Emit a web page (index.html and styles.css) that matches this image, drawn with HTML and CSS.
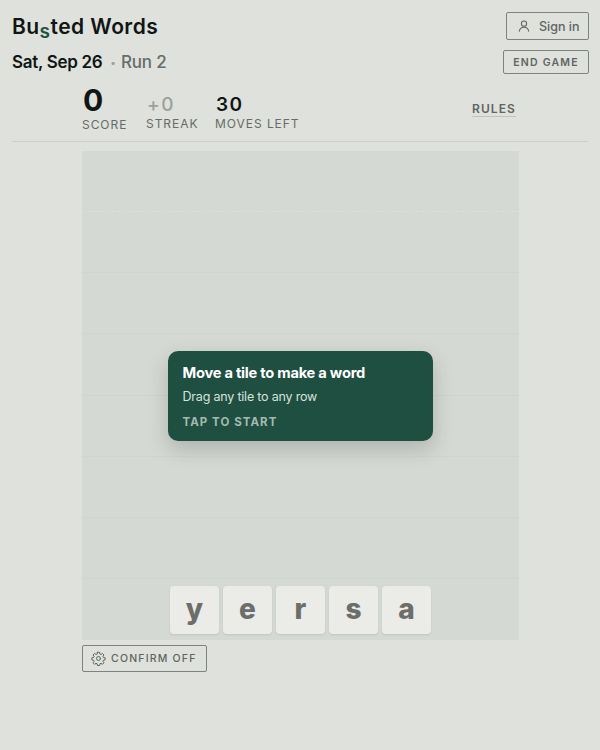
FILE: index.html
```html
<!DOCTYPE html>
<html lang="en">
<head>
<meta charset="utf-8">
<title>Busted Words</title>
<link rel="stylesheet" href="styles.css">
</head>
<body>
<div class="app">
  <header class="top">
    <div class="top-row">
      <h1 class="logo">Bu<span class="logo-s">s</span>ted Words</h1>
      <button class="btn signin">
        <svg class="icon-user" viewBox="0 0 24 24" fill="none" stroke="currentColor" stroke-width="1.8" stroke-linecap="round" stroke-linejoin="round"><circle cx="12" cy="8" r="4.5"/><path d="M4 21c.6-4.6 3.8-7 8-7s7.400 2.400 8 7"/></svg>
        Sign in
      </button>
    </div>
    <div class="date-row">
      <div class="date"><b>Sat, Sep 26</b><i class="dot">•</i><span class="run">Run 2</span></div>
      <button class="btn end">END GAME</button>
    </div>
  </header>
  <section class="stats">
    <div class="stat stat-score"><div class="value big">0</div><div class="label">SCORE</div></div>
    <div class="stat stat-streak"><div class="value muted">+0</div><div class="label">STREAK</div></div>
    <div class="stat stat-moves"><div class="value">30</div><div class="label">MOVES LEFT</div></div>
    <a class="rules">RULES</a>
  </section>
  <main class="game">
    <div class="board">
      <div class="row"></div><div class="row"></div><div class="row"></div><div class="row"></div>
      <div class="row"></div><div class="row"></div><div class="row"></div>
      <div class="row tiles">
        <div class="tile">y</div><div class="tile">e</div><div class="tile">r</div><div class="tile">s</div><div class="tile">a</div>
      </div>
      <div class="hint">
        <div class="hint-title">Move a tile to make a word</div>
        <div class="hint-sub">Drag any tile to any row</div>
        <div class="hint-cta">TAP TO START</div>
      </div>
    </div>
    <button class="btn confirm">
      <svg class="icon-gear" viewBox="0 0 24 24" fill="none" stroke="currentColor" stroke-width="1.6" stroke-linecap="round" stroke-linejoin="round"><circle cx="12" cy="12" r="3.200"/><path d="M10.300 2h3.400l.5 2.700 1.800.8 2.300-1.600 2.400 2.400-1.600 2.300.8 1.800 2.700.5v3.400l-2.700.5-.8 1.800 1.600 2.300-2.400 2.400-2.300-1.600-1.800.8-.5 2.700h-3.400l-.5-2.700-1.800-.8-2.300 1.600-2.400-2.400 1.600-2.300-.8-1.800-2.700-.5v-3.400l2.700-.5.8-1.800-1.600-2.300 2.400-2.400 2.300 1.600 1.800-.8z"/></svg>
      CONFIRM OFF
    </button>
  </main>
</div>
</body>
</html>
```
FILE: styles.css
```css
* { box-sizing: border-box; }
html, body { margin: 0; height: 100%; }
body {
  background: #dee1dc;
  color: #111513;
  font-family: Inter, "Liberation Sans", sans-serif;
}
.app { width: 600px; height: 750px; padding: 12px 11px 0 12px; }
.top-row, .date-row { display: flex; justify-content: space-between; align-items: flex-start; }
.top-row { height: 38px; }
.date-row { height: 34px; }
.logo {
  margin: 0;
  font: 600 21px/29px Inter, sans-serif;
  letter-spacing: .45px;
}
.logo-s { color: #1f5243; position: relative; top: 4px; font-size: 19px; }
.btn {
  display: flex;
  align-items: center;
  background: transparent;
  border: 1.500px solid #7d837e;
  border-radius: 2px;
  color: #5f655f;
  font-family: Inter, sans-serif;
}
.signin { width: 83px; height: 28px; padding: 0 0 0 10px; gap: 8px; font-size: 12.500px; font-weight: 500; }
.icon-user { width: 14px; height: 14px; }
.end { width: 86px; height: 24px; justify-content: center; padding: 0; font-size: 10.500px; font-weight: 600; letter-spacing: 1.200px; }
.date { display: flex; align-items: center; font-size: 17px; line-height: 24px; }
.date b { font-weight: 600; letter-spacing: -.3px; }
.dot { font-style: normal; color: #9aa09b; font-size: 10px; margin: 0 5px 0 8px; }
.run { color: #666c67; font-weight: 500; letter-spacing: -.2px; }
.stats { position: relative; display: flex; align-items: flex-end; height: 59px; padding: 0 0 9px 70px; border-bottom: 1px solid #cdd1cb; margin-top: -1px; margin-right: 1px; }
.stat { display: flex; flex-direction: column; align-items: flex-start; }
.stat-score { width: 64px; }
.stat-streak { width: 69px; margin-bottom: 1px; }
.stat-moves { margin-bottom: 1px; }
.value { font-size: 19px; line-height: 24px; font-weight: 600; letter-spacing: 1.500px; margin-left: 1px; }
.value.big { font-size: 30px; line-height: 34px; font-weight: 700; letter-spacing: 0; margin-bottom: 1px; }
.value.muted { color: #9ba09c; font-weight: 500; }
.label { font-size: 12px; line-height: 14px; letter-spacing: .95px; color: #666c67; font-weight: 400; }
.rules {
  position: absolute;
  left: 460px;
  top: 18px;
  font-size: 12px;
  line-height: 15px;
  font-weight: 600;
  letter-spacing: 1.100px;
  color: #5f655f;
  border-bottom: 1px solid #bfc4be;
}
.game { padding: 9px 0 0 70px; }
.board {
  position: relative;
  width: 437px;
  height: 489px;
  background: #d4d9d3;
  display: grid;
  grid-template-rows: repeat(8, 1fr);
}
.row { border-bottom: 1px solid #cfd4ce; }
.row:first-child { border-bottom: 1px dashed #dcdfda; }
.tiles { border-bottom: 0; display: flex; justify-content: center; gap: 4.500px; padding-top: 7px; }
.tile {
  width: 48.500px;
  height: 48.500px;
  background: #ebece7;
  border-radius: 4px;
  box-shadow: 0 1px 2px rgba(60, 70, 60, .12);
  display: flex;
  align-items: center;
  justify-content: center;
  color: #6b6e6a;
  font: 800 28px/1 Inter, sans-serif;
  padding-bottom: 3px;
}
.hint {
  position: absolute;
  left: 86px;
  top: 200px;
  width: 265px;
  height: 90px;
  padding: 12px 15px 12px 14.500px;
  background: #1f4f41;
  border-radius: 10px;
  box-shadow: 0 8px 20px rgba(40, 50, 40, .22);
  color: #fff;
}
.hint-title { font-size: 14.700px; line-height: 20px; font-weight: 700; letter-spacing: -.25px; }
.hint-sub { margin-top: 4px; font-size: 12.500px; line-height: 20px; color: #d8e2dc; letter-spacing: -.2px; }
.hint-cta { margin-top: 5px; font-size: 11.500px; line-height: 20px; font-weight: 700; letter-spacing: 1.050px; color: #a4bab0; }
.confirm { width: 125px; height: 27px; margin-top: 5px; padding: 0 0 0 8px; gap: 5px; font-size: 10.500px; font-weight: 500; letter-spacing: 1.200px; }
.icon-gear { width: 15px; height: 15px; }
```
